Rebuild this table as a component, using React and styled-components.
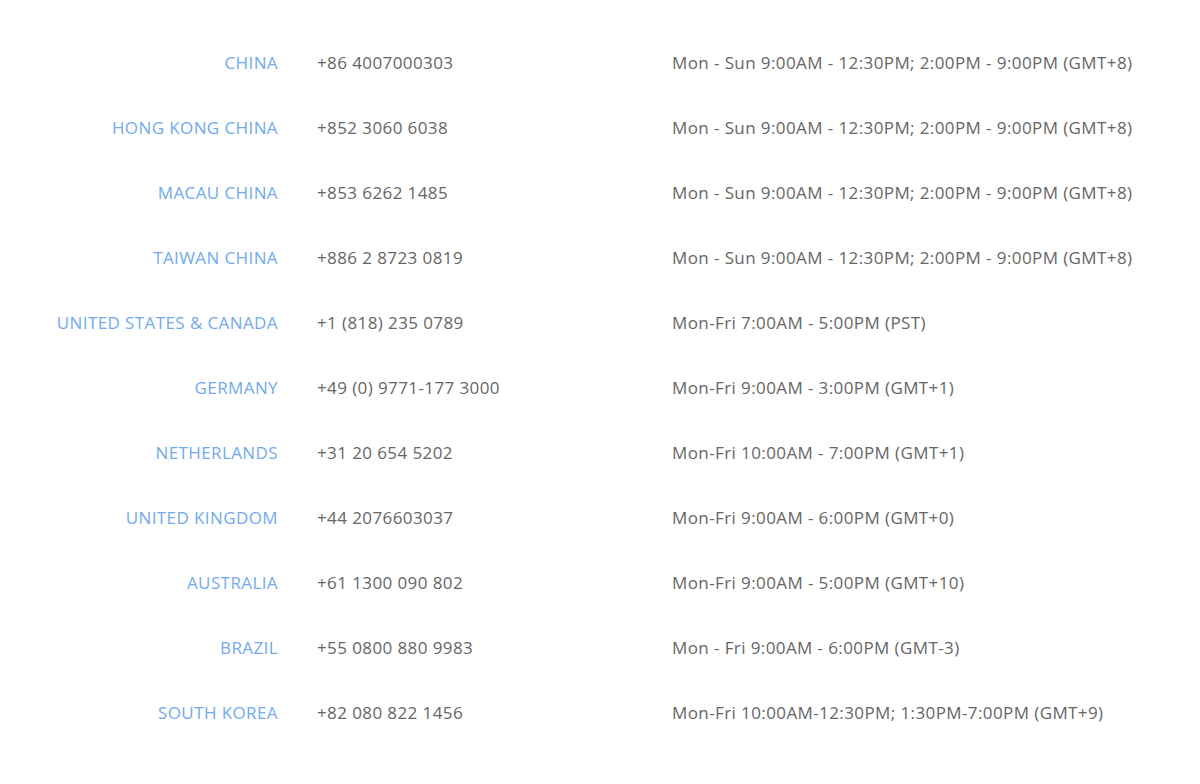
import React from "react";
import styled, { createGlobalStyle } from "styled-components";

const GlobalStyle = createGlobalStyle`
    body {
        margin: 0;
        background: #fff;
        font-family: "Open Sans", "Liberation Sans", sans-serif;
    }
`;

const Table = styled.div`
    display: grid;
    grid-template-columns: 278px 316px auto;
    column-gap: 39px;
    grid-auto-rows: 65px;
    padding-top: 30px;
    font-size: 17px;
    letter-spacing: 0.4px;
`;

const Cell = styled.div`
    display: flex;
    align-items: center;
    justify-content: ${props => (props.right ? "flex-end" : "flex-start")};
    color: ${props => (props.blue ? "#72aaee" : "#666666")};
    white-space: nowrap;
`;

const rows = [
    ["CHINA", "+86 4007000303", "Mon - Sun 9:00AM - 12:30PM; 2:00PM - 9:00PM (GMT+8)"],
    ["HONG KONG CHINA", "+852 3060 6038", "Mon - Sun 9:00AM - 12:30PM; 2:00PM - 9:00PM (GMT+8)"],
    ["MACAU CHINA", "+853 6262 1485", "Mon - Sun 9:00AM - 12:30PM; 2:00PM - 9:00PM (GMT+8)"],
    ["TAIWAN CHINA", "+886 2 8723 0819", "Mon - Sun 9:00AM - 12:30PM; 2:00PM - 9:00PM (GMT+8)"],
    ["UNITED STATES & CANADA", "+1 (818) 235 0789", "Mon-Fri 7:00AM - 5:00PM (PST)"],
    ["GERMANY", "+49 (0) 9771-177 3000", "Mon-Fri 9:00AM - 3:00PM (GMT+1)"],
    ["NETHERLANDS", "+31 20 654 5202", "Mon-Fri 10:00AM - 7:00PM (GMT+1)"],
    ["UNITED KINGDOM", "+44 2076603037", "Mon-Fri 9:00AM - 6:00PM (GMT+0)"],
    ["AUSTRALIA", "+61 1300 090 802", "Mon-Fri 9:00AM - 5:00PM (GMT+10)"],
    ["BRAZIL", "+55 0800 880 9983", "Mon - Fri 9:00AM - 6:00PM (GMT-3)"],
    ["SOUTH KOREA", "+82 080 822 1456", "Mon-Fri 10:00AM-12:30PM; 1:30PM-7:00PM (GMT+9)"],
];

const App = () => {
    return (
        <>
            <GlobalStyle />
            <Table>
                {rows.map(([country, phone, hours]) => (
                    <React.Fragment key={country}>
                        <Cell right blue>{country}</Cell>
                        <Cell>{phone}</Cell>
                        <Cell>{hours}</Cell>
                    </React.Fragment>
                ))}
            </Table>
        </>
    );
};

export default App;
